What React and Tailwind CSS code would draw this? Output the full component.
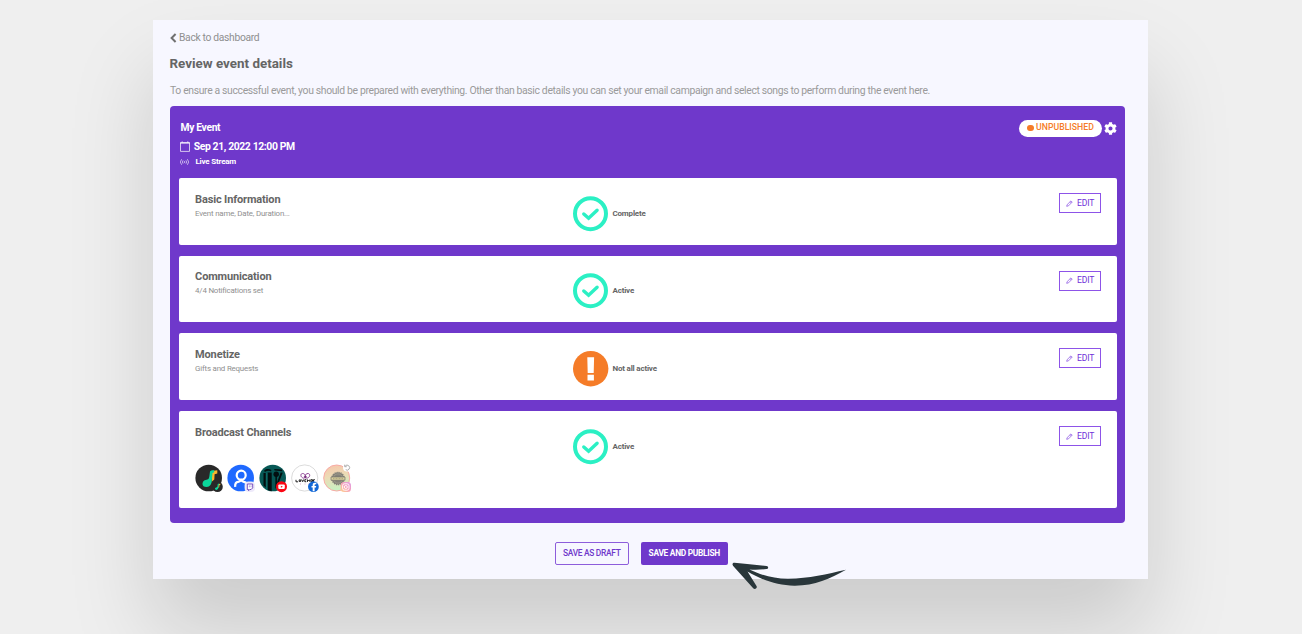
import { FaCog } from 'react-icons/fa';

const sections = [
  { title: 'Basic Information', subtitle: 'Event name, Date, Duration...', status: 'Complete', ok: true },
  { title: 'Communication', subtitle: '4/4 Notifications set', status: 'Active', ok: true },
  { title: 'Monetize', subtitle: 'Gifts and Requests', status: 'Not all active', ok: false },
  { title: 'Broadcast Channels', status: 'Active', ok: true, channels: true },
];

function ChevronIcon() {
  return (
    <svg viewBox="0 0 7 10" className="h-[10px] w-[7px]" fill="none" stroke="#707070" strokeWidth="2">
      <path d="M5.6 1L1.600 5l4 4" />
    </svg>
  );
}

function CheckIcon() {
  return (
    <svg viewBox="0 0 36 36" className="h-9 w-9" fill="none" stroke="#2bf0c4">
      <circle cx="17.5" cy="17.7" r="15.5" strokeWidth="4" />
      <path d="M10.8 18l4.8 4.3 8.5-8.1" strokeWidth="3.4" strokeLinecap="round" />
    </svg>
  );
}

function WarningIcon() {
  return (
    <svg viewBox="0 0 36 36" className="h-9 w-9">
      <circle cx="17.7" cy="17.7" r="17.7" fill="#f57c28" />
      <path d="M14.3 6.2h6.8l-.4 15.800h-6zM14.500 23.700h6.400v5.800h-6.400z" fill="#fff" />
    </svg>
  );
}

function CalendarIcon() {
  return (
    <svg viewBox="0 0 10 11" className="h-[11px] w-[10px]" fill="none" stroke="#fff">
      <path d="M.5 2h9v8.4h-9z" strokeWidth=".7" />
      <path d="M.2 1.8h9.6M2.2.5v1M7.8.5v1" strokeWidth="1" />
    </svg>
  );
}

function LiveIcon() {
  return (
    <svg viewBox="0 0 10 8" className="h-2 w-[9px]" fill="none" stroke="#fff" strokeWidth=".8" opacity=".85">
      <path d="M1.8.9a4.6 4.6 0 0 0 0 6.2M8.2.9a4.6 4.6 0 0 1 0 6.2M3.4 2.2a2.7 2.7 0 0 0 0 3.6M6.6 2.2a2.7 2.7 0 0 1 0 3.6" />
      <circle cx="5" cy="4" r=".8" fill="#fff" stroke="none" />
    </svg>
  );
}

function PencilIcon() {
  return (
    <svg viewBox="0 0 8 8" className="h-[7px] w-[7px]" fill="none" stroke="#7b3fe0" strokeWidth=".75">
      <path d="M.8 7.2l.5-1.9L5.7 1l1.4 1.4L2.8 6.7zM4.7 2l1.4 1.4" />
    </svg>
  );
}

// green and yellow note glyph
function Note() {
  return (
    <>
      <path d="M17 7l5.3-.8v3.300l-2.700.7-.3 5.400-2.600 2.200z" fill="#fdb72b" />
      <path d="M15 7.500c.5-.9 1.600-1.300 4.200-1.300v2l-1.700.7-.6 6.400c0 4.800-2 7.700-5.200 7.700-2.800 0-4.400-1.400-4.200-3.600.2-2.800 2.500-3.600 4.900-4 1.700-.3 1.800-1.900 2.100-4.100z" fill="#0bd69b" />
    </>
  );
}

function NoteChannel() {
  return (
    <svg viewBox="0 0 30 30" className="h-[30px] w-[30px]">
      <circle cx="13.7" cy="14" r="13.3" fill="#292929" />
      <Note />
      <circle cx="22.5" cy="22.7" r="5.3" fill="#292929" />
      <g transform="translate(17.3 17.6) scale(.36)">
        <Note />
      </g>
    </svg>
  );
}

function TwitchChannel() {
  return (
    <svg viewBox="0 0 30 30" className="h-[30px] w-[30px]">
      <circle cx="13.7" cy="14" r="13.3" fill="#1f69ff" />
      <g fill="none" stroke="#fff" strokeWidth="2.2">
        <circle cx="14.2" cy="11.2" r="4.5" />
        <path d="M8.2 22.800c-.3-3.300 1-4.800 3-5 1.500-.1 2.200-.7 3-1.500.8.900 1.400 1.400 2.700 1.600 1.300.2 2.200.8 2.700 1.900" />
      </g>
      <rect x="17.6" y="17.6" width="10.4" height="10.4" rx="4" fill="#eeeafa" />
      <path d="M20.3 20h5.4v3.9l-1.6 1.600h-1.400l-1.100 1.200v-1.200h-1.300z" fill="#fff" stroke="#6c3fb8" strokeWidth=".9" />
      <path d="M22.4 21.4v1.9M24 21.4v1.9" stroke="#6c3fb8" strokeWidth=".5" />
    </svg>
  );
}

function YoutubeChannel() {
  return (
    <svg viewBox="0 0 30 30" className="h-[30px] w-[30px]">
      <circle cx="13.7" cy="14" r="13.3" fill="#075855" />
      <g fill="#020f10">
        <path d="M5.2 6.2c2-1.6 5.5-1.4 7.2-.3l-.3 1.5c-2-1-4.3-.6-6.3.6z" />
        <path d="M4.5 9h2.2v14.6l-2.2-2zM8.7 8.5h4v18.700l-4-1.200z" />
        <path d="M15.2 5l7.6.6.5 1.6-7.7-.7z" />
        <circle cx="17.2" cy="10.2" r="2.7" />
        <path d="M16.4 11h1.5v11l-1.5 3zM21.700 8.500l2 .3-4 10h-1.800z" />
      </g>
      <path d="M7.8 8.8v17" stroke="#168079" strokeWidth=".6" />
      <circle cx="22.5" cy="22.7" r="5.5" fill="#fb0613" />
      <rect x="19.3" y="20.4" width="6.5" height="4.6" rx="1.2" fill="#fff" />
      <path d="M21.9 21.7l2 1-2 1z" fill="#fb0613" />
    </svg>
  );
}

function FacebookChannel() {
  return (
    <svg viewBox="0 0 30 30" className="h-[30px] w-[30px]">
      <circle cx="13.7" cy="14" r="13.1" fill="#fff" stroke="#cbcbcb" strokeWidth=".7" />
      <g fill="none" stroke="#85338a" strokeWidth=".9">
        <path d="M13.300 14.300c-4.200-.5-4.200-4.800-1.700-4.800 1.500 0 2.600 1 2.700 2.200.1-1.200 1.200-2.200 2.700-2.200 2.500 0 2.500 4.300-1.700 4.800" />
        <circle cx="14.3" cy="12.9" r="1" fill="#58205f" />
      </g>
      <path
        d="M5 15.800v2h2M8.200 15.900h1.500v1.600H8.200zM10.600 15.500l1.100 2.200 1-2.200M15.300 15.700h-1.500v2h1.500M16.500 17.900v-2.200l1.200 1.300 1.200-1.300v2.200M20 15.700h1.500v2H20zM22.500 17.900v-2.200h1.400"
        fill="none"
        stroke="#222"
        strokeWidth="1"
      />
      <path d="M9 20h1M13.5 20h1M17 20h.8" stroke="#d5a6cc" strokeWidth=".8" />
      <circle cx="22.4" cy="22.7" r="5.4" fill="#1267d6" />
      <path d="M23.6 27.2v-3.6h1.4l.2-1.7h-1.6v-.8c0-.6.3-.8.9-.8h.8v-1.5H24c-1.6 0-2.3.9-2.3 2.2v.9h-1.2v1.700h1.200v3.600z" fill="#fff" />
    </svg>
  );
}

function InstagramChannel() {
  return (
    <svg viewBox="0 0 30 30" className="h-[30px] w-[30px]">
      <defs>
        <linearGradient id="face" x1="0" y1="0" x2=".2" y2="1">
          <stop offset="0" stopColor="#f7c4aa" />
          <stop offset=".5" stopColor="#ecdcb6" />
          <stop offset="1" stopColor="#c9f0c2" />
        </linearGradient>
        <linearGradient id="insta" x1="0" y1="1" x2="1" y2="0">
          <stop offset="0" stopColor="#ffd58c" />
          <stop offset=".5" stopColor="#f7a1b8" />
          <stop offset="1" stopColor="#dd9be8" />
        </linearGradient>
      </defs>
      <circle cx="13.7" cy="14" r="13" fill="url(#face)" stroke="#f8aaa5" strokeWidth="1" />
      <circle cx="15" cy="14.500" r="6" fill="#858279" stroke="#858279" strokeWidth="1.6" strokeDasharray="1.3 .7" />
      <circle cx="15" cy="14.500" r="4.6" fill="none" stroke="#aaa694" strokeWidth=".6" />
      <path d="M8 13h14v3.200H8z" fill="#d9cf9d" stroke="#77756a" strokeWidth=".7" />
      <path d="M10 14.600h10" stroke="#aea77e" strokeWidth="1" strokeDasharray="1 .5" />
      <circle cx="24" cy="3.5" r="4" fill="#fff" />
      <path d="M22.3 1.9A2.5 2.5 0 1 1 22.7 5.700M21.700.700v2h2" fill="none" stroke="#a5a5a5" strokeWidth=".9" />
      <rect x="17.6" y="18" width="10.4" height="10" rx="3.5" fill="url(#insta)" />
      <rect x="19.6" y="19.8" width="6.4" height="6.4" rx="1.9" fill="none" stroke="#fff" strokeWidth=".9" />
      <circle cx="22.8" cy="23" r="1.5" fill="none" stroke="#fff" strokeWidth=".9" />
    </svg>
  );
}

function SectionCard({ section }) {
  return (
    <div
      className={`flex rounded-[2px] bg-white pl-[16.4px] pr-[16.3px] ${
        section.channels ? 'h-[96.5px]' : 'h-[66.7px]'
      }`}
    >
      <div className="w-[377.6px] pt-[14.6px]">
        <h3 className="whitespace-nowrap text-[11px] font-bold leading-[14px] tracking-[-0.15px] text-[#656565]">
          {section.title}
        </h3>
        {section.subtitle && (
          <p className="whitespace-nowrap text-[7.9px] leading-[13px] tracking-[-0.19px] text-[#8f8f8f]">
            {section.subtitle}
          </p>
        )}
        {section.channels && (
          <div className="mt-[24px] flex gap-[2px]">
            <NoteChannel />
            <TwitchChannel />
            <YoutubeChannel />
            <FacebookChannel />
            <InstagramChannel />
          </div>
        )}
      </div>
      <div className="mt-[17.8px] flex h-9 flex-1 items-center gap-[3.8px] self-start">
        {section.ok ? <CheckIcon /> : <WarningIcon />}
        <span className="text-[8px] font-bold tracking-[-0.19px] text-[#656565]">{section.status}</span>
      </div>
      <button className="mt-[15px] flex h-5 w-[41.5px] items-center justify-center gap-[4px] border border-[#8d53e8] text-[8.6px] tracking-[-0.2px] text-[#7030d8]">
        <PencilIcon />
        EDIT
      </button>
    </div>
  );
}

export default function App() {
  return (
    <div className="h-[634px] w-[1302px] overflow-hidden bg-[#efefef] pl-[153px] pt-5 font-['Roboto',sans-serif]">
      <main className="h-[559px] w-[995px] bg-[#f7f7ff] pl-[17px] pt-[10.5px] shadow-[0_52px_80px_rgba(0,0,0,0.15)]">
        <a className="flex h-[14px] items-center gap-[2px] text-[10.3px] tracking-[-0.32px] text-[#8f8f8f]">
          <ChevronIcon />
          Back to dashboard
        </a>
        <h1 className="-ml-[0.5px] mt-[10.5px] text-[13.4px] font-bold leading-[18px] text-[#656565]">
          Review event details
        </h1>
        <p className="mt-[10.5px] whitespace-nowrap text-[10.4px] leading-[14px] tracking-[-0.35px] text-[#9a9a9a]">
          To ensure a successful event, you should be prepared with everything. Other than basic details you can set
          your email campaign and select songs to perform during the event here.
        </p>

        <section className="mt-[8px] h-[417px] w-[955.4px] rounded-[4px] bg-[#6f38cb] pl-[8.7px] pr-[8.2px]">
          <div className="flex h-[72.5px] justify-between pl-[1.8px]">
            <div className="pt-[15px] font-bold text-white">
              <div className="text-[10.3px] leading-[14px] tracking-[-0.33px]">My Event</div>
              <div className="mt-[4px] flex items-center gap-[3.2px] text-[10.4px] leading-[15px] tracking-[-0.38px]">
                <CalendarIcon />
                Sep 21, 2022 12:00 PM
              </div>
              <div className="mt-[2.5px] flex items-center gap-[6px] text-[8px] leading-[12px] tracking-[-0.2px]">
                <LiveIcon />
                Live Stream
              </div>
            </div>
            <div className="mt-[14px] flex h-[17px] items-center gap-[2.5px]">
              <div className="flex h-[17px] w-[82.5px] items-center justify-center gap-[2.5px] rounded-full bg-white text-[8.7px] font-medium text-[#f57c28]">
                <span className="h-[6.5px] w-[6.5px] rounded-full bg-[#f57c28]" />
                UNPUBLISHED
              </div>
              <FaCog className="h-[13px] w-[13px] text-white" />
            </div>
          </div>
          <div className="flex flex-col gap-[11px]">
            {sections.map((section) => (
              <SectionCard key={section.title} section={section} />
            ))}
          </div>
        </section>

        <div className="relative mt-[19px] flex gap-[12.5px] pl-[385px]">
          <button className="h-[23px] w-[73.5px] whitespace-nowrap rounded-[2px] border border-[#8d5ddb] text-[8.4px] font-medium tracking-[-0.3px] text-[#6f38cb]">
            SAVE AS DRAFT
          </button>
          <button className="h-[23px] w-[86.5px] whitespace-nowrap rounded-[2px] bg-[#6f38cb] text-[8.4px] font-bold tracking-[-0.3px] text-white">
            SAVE AND PUBLISH
          </button>
          {/* hand drawn arrow pointing at the publish button */}
          <svg viewBox="0 0 114 28" className="absolute left-[562px] top-[20px] h-7 w-[114px]" fill="#29363a">
            <path d="M2.4.8C14 1.800 24 3 34.500 3.900c2.200.3 2.200 3 0 3.200C28 7.800 22 8 17.500 7.400c11 5.500 25 9.600 39 9.400C77 16.600 95 12 114 7.800 98 17 83 23.500 63 23.700 46 23.900 29 17.600 15.500 9.600L24.500 24c1.200 2.200-1.600 3.900-3.300 2.200L1.200 4C-.2 2.400.6.700 2.400.8z" />
          </svg>
        </div>
      </main>
    </div>
  );
}
